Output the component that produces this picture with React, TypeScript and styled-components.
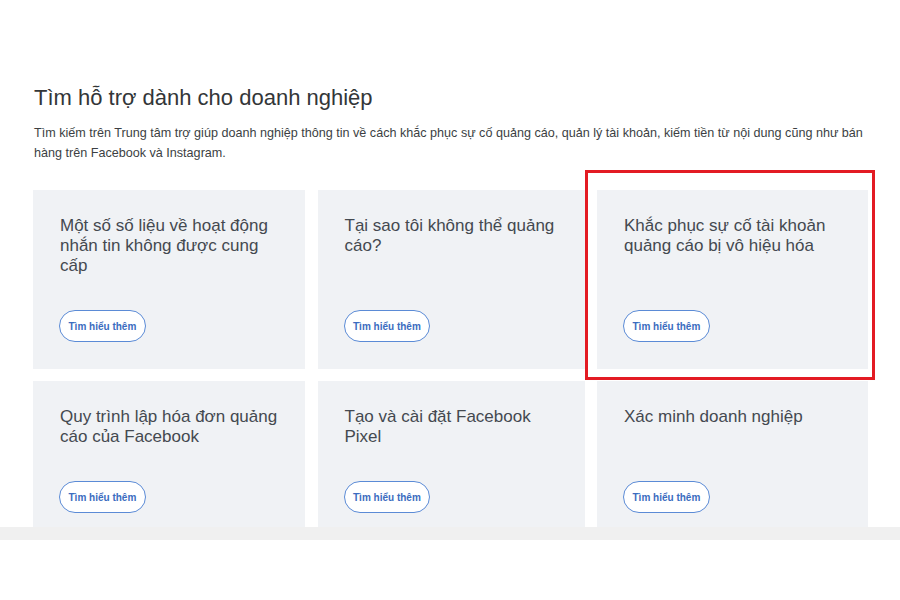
import React from "react";
import styled, { createGlobalStyle } from "styled-components";

const Global = createGlobalStyle`
  html, body { margin: 0; padding: 0; background: #ffffff; }
  body { font-family: "Liberation Sans", Arial, sans-serif; }
`;

const Viewport = styled.div`
  height: 527px;
  overflow: hidden;
  background: #ffffff;
`;

const Section = styled.section`
  padding: 85px 32px 0 33px;
`;

const Heading = styled.h2`
  margin: 0;
  font-size: 22px;
  line-height: 26px;
  font-weight: 400;
  color: #333638;
  padding-left: 1px;
`;

const Lead = styled.p`
  margin: 12px 0 0;
  padding-left: 1px;
  font-size: 12.6px;
  line-height: 20px;
  color: #3c3f43;
`;

const Grid = styled.div`
  margin-top: 27px;
  width: 835px;
  display: grid;
  grid-template-columns: 272px 267px 271px;
  gap: 12px 12.5px;
`;

const Card = styled.div`
  position: relative;
  background: #f0f2f5;
  padding: 26px 18px 27px 27px;
  display: flex;
  flex-direction: column;
`;

const CardTitle = styled.div`
  flex: 1;
  font-size: 17px;
  line-height: 20px;
  color: #444950;
`;

const MoreButton = styled.button`
  margin-top: 34px;
  align-self: flex-start;
  margin-left: -1px;
  height: 32px;
  padding: 0 8.5px;
  border-radius: 16px;
  border: 1.5px solid #5b8bd6;
  background: #ffffff;
  color: #3b6cc0;
  font-family: "Liberation Sans", Arial, sans-serif;
  font-size: 10px;
  font-weight: 700;
  cursor: pointer;
`;

const Highlight = styled.div`
  position: absolute;
  top: -20px;
  left: -12px;
  right: -7px;
  bottom: -11px;
  border: 3px solid #e31b23;
  pointer-events: none;
`;

const Band = styled.div`
  height: 13px;
  background: #f0f0f0;
`;

const items = [
  "Một số số liệu về hoạt động nhắn tin không được cung cấp",
  "Tại sao tôi không thể quảng cáo?",
  "Khắc phục sự cố tài khoản quảng cáo bị vô hiệu hóa",
  "Quy trình lập hóa đơn quảng cáo của Facebook",
  "Tạo và cài đặt Facebook Pixel",
  "Xác minh doanh nghiệp",
];

export default function App() {
  return (
    <>
      <Global />
      <Viewport>
        <Section>
          <Heading>Tìm hỗ trợ dành cho doanh nghiệp</Heading>
          <Lead>
            Tìm kiếm trên Trung tâm trợ giúp doanh nghiệp thông tin về cách khắc phục sự cố quảng cáo, quản lý tài khoản, kiếm tiền từ nội dung cũng như bán hàng trên Facebook và Instagram.
          </Lead>
          <Grid>
            {items.map((t, i) => (
              <Card key={i}>
                {i === 2 && <Highlight />}
                <CardTitle>{t}</CardTitle>
                <MoreButton>Tìm hiểu thêm</MoreButton>
              </Card>
            ))}
          </Grid>
        </Section>
      </Viewport>
      <Band />
    </>
  );
}
